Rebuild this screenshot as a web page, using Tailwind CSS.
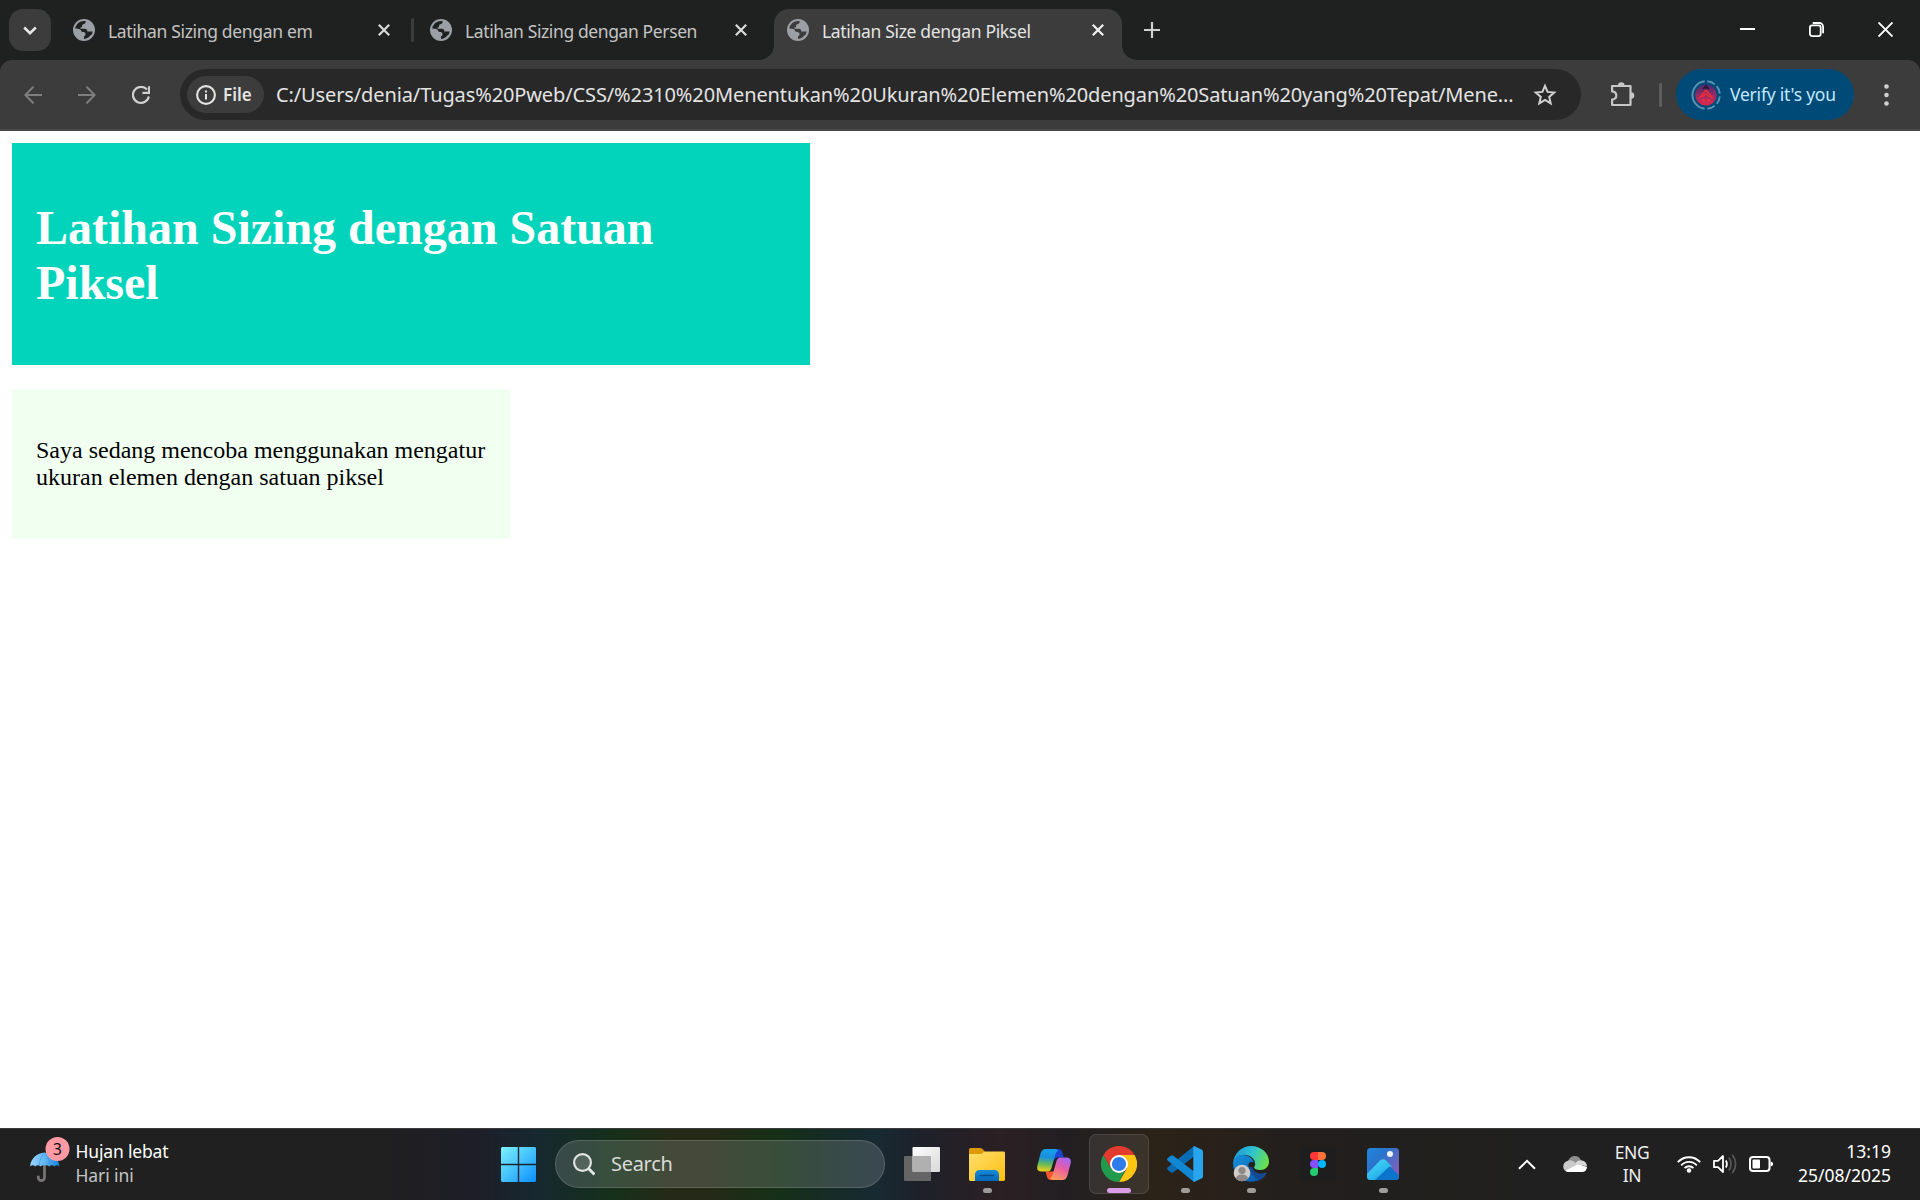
<!DOCTYPE html>
<html lang="id">
<head>
<meta charset="utf-8">
<title>Latihan Size dengan Piksel</title>
<script src="https://cdn.jsdelivr.net/npm/@tailwindcss/browser@4"></script>
</head>
<body class="flex h-[1200px] w-[1920px] flex-col overflow-hidden bg-white font-['Noto_Sans',sans-serif] whitespace-nowrap">

<svg class="hidden">
  <symbol id="globe" viewBox="0 0 22 22">
    <circle cx="11" cy="11" r="11" fill="#9aa0a6"/>
    <path fill="var(--hole)" d="M2.200 9.400C3.100 5.200 6.600 2.200 11 2.100h1.600c.1 1.700-.6 2.900-2.100 3.200-1.200.2-1.400.8-1.400 1.900 0 .8-.7 1.200-1.700 1.300v1.300h4.400c1.700 0 2.600 1 2.600 2.600v1.200h1.500c1.200 0 2 .5 2.500 1.600-1.600 2.700-4.300 4.500-7.400 4.700v-2.600c1.200-.2 1.500-.9 1.500-2.200 0-1.300-.6-1.900-1.900-2.100l-2-.3c-.6-2.300-2.400-3.400-6.400-3.300z"/>
    <path fill="var(--hole)" d="M14.400 12.400h5.300c-.3 1.400-.8 2.500-1.500 3.500l-3.800-1.600z"/>
  </symbol>
  <symbol id="close" viewBox="0 0 12 12"><path d="M.8.8l10.400 10.400M11.200.8L.8 11.200" fill="none" stroke="currentColor" stroke-width="2.200"/></symbol>
</svg>

<!-- Tab strip -->
<header class="flex h-[60px] shrink-0 bg-[#1f2120] text-[17.5px] tracking-[-0.33px]">
  <button class="mt-[9px] ml-[9px] grid size-[42px] place-items-center rounded-[14px] bg-[#3c3c3c]">
    <svg width="14" height="9" viewBox="0 0 14 9" fill="none" stroke="#e8e8e8" stroke-width="2.500"><path d="M1.200 1.500L7 7.200l5.800-5.700"/></svg>
  </button>
  <div class="mt-[9px] ml-[9px] flex w-[348px] items-start pt-[10px] pl-[13px] text-[#c3c3c3]">
    <svg class="size-[22px] [--hole:#1f2120]"><use href="#globe"/></svg>
    <span class="mt-px ml-[13px] w-[270px] leading-[22px]">Latihan Sizing dengan em</span>
    <svg class="mt-[5px] size-[12px] text-[#dadada]"><use href="#close"/></svg>
  </div>
  <div class="mt-[18px] ml-[3px] h-[24px] w-[3px] rounded-full bg-[#3c3c3c]"></div>
  <div class="mt-[9px] ml-[3px] flex w-[348px] items-start pt-[10px] pl-[13px] text-[#c3c3c3]">
    <svg class="size-[22px] [--hole:#1f2120]"><use href="#globe"/></svg>
    <span class="mt-px ml-[13px] w-[270px] leading-[22px] tracking-[-0.39px]">Latihan Sizing dengan Persen</span>
    <svg class="mt-[5px] size-[12px] text-[#dadada]"><use href="#close"/></svg>
  </div>
  <div class="relative mt-[9px] ml-[9px] flex w-[348px] items-start rounded-t-[15px] bg-[#3c3c3c] pt-[10px] pl-[13px] text-[#e3e3e3]">
    <svg class="absolute bottom-0 -left-[15px]" width="15" height="15"><path fill="#3c3c3c" d="M15 0v15H0A15 15 0 0 0 15 0z"/></svg>
    <svg class="absolute -right-[15px] bottom-0" width="15" height="15"><path fill="#3c3c3c" d="M0 0v15h15A15 15 0 0 1 0 0z"/></svg>
    <svg class="size-[22px] [--hole:#3c3c3c]"><use href="#globe"/></svg>
    <span class="mt-px ml-[13px] w-[270px] leading-[22px]">Latihan Size dengan Piksel</span>
    <svg class="mt-[5px] size-[12px] text-[#f1f1f1]"><use href="#close"/></svg>
  </div>
  <svg class="mt-[22px] ml-[22px]" width="16" height="16" viewBox="0 0 16 16" stroke="#d0d0d0" stroke-width="2.200"><path d="M8 0v16M0 8h16"/></svg>
  <div class="mr-[27px] ml-auto flex items-start pt-[22px]">
    <svg class="mr-[54px]" width="15" height="15" viewBox="0 0 15 15"><path fill="#fff" d="M0 6h15v2H0z"/></svg>
    <svg class="mr-[54px]" width="15" height="15" viewBox="0 0 15 15" fill="none" stroke="#fff" stroke-width="1.800"><rect x=".9" y="3.300" width="10.800" height="10.800" rx="2.300"/><path d="M3.700 1h6.600a3.800 3.800 0 0 1 3.800 3.800v6.500"/></svg>
    <svg width="15" height="15" viewBox="0 0 15 15" stroke="#fff" stroke-width="1.900"><path d="M.5.5l14 14M14.500.5l-14 14"/></svg>
  </div>
</header>

<!-- Toolbar -->
<div class="shrink-0 bg-[#1f2120]">
<nav class="flex h-[71px] items-center rounded-t-[12px] border-b-2 border-[#48484a] bg-[#3c3c3c]">
  <svg class="ml-[24px]" width="18" height="18" viewBox="0 0 18 18" fill="none" stroke="#7e7e7e" stroke-width="2"><path d="M18 9H1.500M9.500 .8L1.300 9l8.200 8.200"/></svg>
  <svg class="ml-[36px]" width="18" height="18" viewBox="0 0 18 18" fill="none" stroke="#7e7e7e" stroke-width="2"><path d="M0 9h16.500M8.500 .8L16.700 9l-8.200 8.200"/></svg>
  <svg class="ml-[36px]" width="18" height="18" viewBox="0 0 18 18"><path d="M16.800 10.500A8 8 0 1 1 15 3.600" fill="none" stroke="#d0d0d0" stroke-width="2.200"/><path d="M17.100.2v6.700h-6.700" fill="none" stroke="#d0d0d0" stroke-width="2.200"/></svg>
  <div class="ml-[30px] flex h-[51px] w-[1401px] items-center rounded-full bg-[#282828] pl-[7px] text-[#e3e3e3]">
    <div class="flex h-[37px] w-[77px] items-center rounded-full bg-[#3c3c3c] pl-[9px]">
      <svg width="20" height="20" viewBox="0 0 20 20"><circle cx="10" cy="10" r="8.900" fill="none" stroke="#e3e3e3" stroke-width="2.100"/><path fill="#e3e3e3" d="M9 9h2v5.500H9zM9 5.500h2v2H9z"/></svg>
      <span class="ml-[7px] text-[17px] font-semibold">File</span>
    </div>
    <span class="ml-[12px] w-[1257px] text-[20px] tracking-[-0.12px]">C:/Users/denia/Tugas%20Pweb/CSS/%2310%20Menentukan%20Ukuran%20Elemen%20dengan%20Satuan%20yang%20Tepat/Mene...</span>
    <svg width="24" height="23" viewBox="0 0 24 23"><path fill="none" stroke="#d0d0d0" stroke-width="2" d="M12 2.800l2.600 6.100 6.600.6-5 4.400 1.500 6.500L12 16.900l-5.700 3.500 1.500-6.500-5-4.400 6.600-.6z"/></svg>
  </div>
  <svg class="ml-[29px] -mt-[2px]" width="26" height="26" viewBox="0 0 26 26"><path fill="none" stroke="#c7c7c7" stroke-width="2.200" stroke-linejoin="round" d="M2.100 5h18.400v19H2.100v-5.400c5.600-.7 5.600-7.500 0-8.200z"/><path fill="#c7c7c7" d="M8 4.500a3.300 3.300 0 0 1 6.600 0zM21 11.200a3.300 3.300 0 0 1 0 6.600z"/></svg>
  <div class="ml-[23px] h-[24px] w-[3px] rounded-full bg-[#5e5e5e]"></div>
  <button class="ml-[14px] flex h-[51px] w-[178px] items-center rounded-full bg-[#004a77] pl-[15px] text-[17.5px] tracking-[-0.22px] text-[#c2e7ff]">
    <svg width="30" height="30" viewBox="0 0 30 30">
      <defs><linearGradient id="avatar" x2="0" y2="1"><stop stop-color="#4a2a70"/><stop offset=".55" stop-color="#a02a62"/><stop offset="1" stop-color="#e0284e"/></linearGradient></defs>
      <circle cx="15" cy="15" r="10.600" fill="url(#avatar)"/>
      <path d="M12 9l3-3 3 3M15 5.500v5" fill="none" stroke="#2c1636" stroke-width="1.600"/>
      <path d="M8.500 18l6.500-8 6.500 8M11.500 17l3.500-3.500 3.500 3.500" fill="none" stroke="#f23035" stroke-width="1.300"/>
      <path d="M11 20.500h3M16 20.500h3" stroke="#f23035" stroke-width="2"/>
      <path d="M13.700 28.800A13.900 13.900 0 0 1 13.700 1.200" fill="none" stroke="#5d93b4" stroke-width="1.900"/>
      <path d="M16.300 1.200A13.900 13.900 0 0 1 28.900 15a13.900 13.900 0 0 1-12.600 13.800" fill="none" stroke="#5d93b4" stroke-width="1.900" stroke-dasharray="8 2.900"/>
    </svg>
    <span class="ml-[9px]">Verify it's you</span>
  </button>
  <svg class="ml-[30px]" width="5" height="22" viewBox="0 0 5 22" fill="#d0d0d0"><circle cx="2.500" cy="2.500" r="2.300"/><circle cx="2.500" cy="11" r="2.300"/><circle cx="2.500" cy="19.500" r="2.300"/></svg>
</nav>
</div>

<!-- Page -->
<main class="flex-1 p-[12px] font-['Liberation_Serif',serif]">
  <section class="h-[222px] w-[798px] bg-[#01d4bb] px-[24px] pt-[57px]">
    <h1 class="text-[48px] leading-[55px] font-bold text-white">Latihan Sizing dengan Satuan<br>Piksel</h1>
  </section>
  <section class="mt-[24px] h-[150px] w-[498px] bg-[#f0fff0] px-[24px] pt-[48px]">
    <p class="text-[24px] leading-[27px] text-black">Saya sedang mencoba menggunakan mengatur<br>ukuran elemen dengan satuan piksel</p>
  </section>
</main>

<!-- Taskbar -->
<footer class="flex h-[72px] shrink-0 items-center border-t border-[#3c3c3c] bg-[linear-gradient(90deg,#202020_0,#202020_380px,#1e1e28_475px,#172830_535px,#152d20_590px,#17301a_615px,#242a17_670px,#242a17_710px,#163018_780px,#162c22_815px,#172a32_875px,#1f2029_925px,#2b2023_1000px,#221f22_1065px,#2b2318_1155px,#29211a_1215px,#221f1d_1290px,#21201d_1450px,#202020_1520px)] pb-px text-[17.5px] text-white">
  <div class="flex w-[501px] items-center pl-[30px]">
    <svg class="-mt-[9px]" width="40" height="46" viewBox="0 0 40 46">
      <defs><linearGradient id="umb"><stop stop-color="#9ad6ff"/><stop offset=".5" stop-color="#62b5f3"/><stop offset="1" stop-color="#1483e0"/></linearGradient></defs>
      <path d="M14.500 28v12.500a3.100 3.100 0 0 1-6.200 0v-1.700" fill="none" stroke="#7b7575" stroke-width="2.700"/>
      <path d="M0 29.500C1 21 7 16 14.500 15.500 22 16 28.500 21 29.500 29.500c-1.800-1.700-3.700-1.700-5.200 0-1.500-1.700-3.500-1.700-5 0-1.500-1.700-7-1.700-9 0-1.500-1.700-3.500-1.700-5 0-1.600-1.700-3.500-1.700-5.300 0z" fill="url(#umb)"/>
      <path d="M14.500 16c-4 4-5 8-5 13M14.500 16c4 4 5 8 5 13" fill="none" stroke="#3f97de" stroke-width=".7"/>
      <circle cx="27.500" cy="12" r="12" fill="#ff99a4"/>
      <text x="27.500" y="17.500" font-size="15.500" text-anchor="middle" fill="#111">3</text>
    </svg>
    <div class="ml-[5.500px] -mt-[2px] leading-[24px]"><div class="tracking-[-0.18px]">Hujan lebat</div><div class="text-[#c4c4c4] tracking-[-0.1px]">Hari ini</div></div>
  </div>
  <svg width="35" height="35" viewBox="0 0 35 35">
    <defs><linearGradient id="win" x2="1" y2="1"><stop stop-color="#7cf2ff"/><stop offset=".5" stop-color="#45c2fc"/><stop offset="1" stop-color="#0a8fff"/></linearGradient></defs>
    <path fill="url(#win)" d="M1 0h15.800v16.800H0V1zM18.200 0H34l1 1v15.800H18.200zM0 18.200h16.800V35H1l-1-1zM18.200 18.200H35V34l-1 1H18.200z"/>
  </svg>
  <div class="ml-[19px] flex h-[48px] w-[330px] items-center rounded-full border border-white/15 bg-white/15 pl-[17px]">
    <svg width="22" height="23" viewBox="0 0 22 23" fill="none" stroke="#e4e6e4"><circle cx="9.500" cy="9.500" r="8.400" fill="#ffffff22" stroke-width="2.100"/><path d="M15.500 15.500l6 6" stroke-width="3"/></svg>
    <span class="ml-[16px] text-[20px] tracking-[-0.3px] text-[#d8dbd6]">Search</span>
  </div>

  <div class="ml-[3px] grid h-full w-[66px] place-items-center pl-[2px]">
    <svg width="36" height="34" viewBox="0 0 36 34">
      <defs><linearGradient id="tv" x2="1" y2="1"><stop stop-color="#fff"/><stop offset="1" stop-color="#d8d8d8"/></linearGradient></defs>
      <rect y="9" width="27" height="25" rx="1" fill="#656565"/><rect x="8.500" width="27.500" height="25" rx="1" fill="url(#tv)"/><path fill="#aaa" fill-opacity=".9" d="M8.500 9H27v16H9.500l-1-1z"/>
    </svg>
  </div>
  <div class="relative grid h-full w-[66px] place-items-center">
    <svg width="36" height="33" viewBox="0 0 36 33">
      <defs><linearGradient id="fold" x2="1" y2="1"><stop stop-color="#ffdf70"/><stop offset="1" stop-color="#ffbe0e"/></linearGradient><linearGradient id="foldb" x2="0" y2="1"><stop stop-color="#138bd9"/><stop offset="1" stop-color="#0568b8"/></linearGradient></defs>
      <path d="M0 1.500Q0 0 1.500 0h9.500q1.500 0 2.500 1l2 2V8H0z" fill="#dd9a05"/><path d="M0 6h12.500l3-2.500H35l1 1V32l-1 1H1l-1-1z" fill="url(#fold)"/>
      <path d="M6 33v-6.500a4.500 4.500 0 0 1 4.500-4.500h15a4.500 4.500 0 0 1 4.500 4.500V33z" fill="url(#foldb)"/><path d="M11.500 27.500h13" stroke="#0a4a86" stroke-width="1.700" stroke-linecap="round"/>
    </svg>
    <i class="absolute bottom-[6px] h-[5px] w-[9px] rounded-full bg-[#9c9a9b]"></i>
  </div>
  <div class="grid h-full w-[66px] place-items-center pl-[2px]">
    <svg width="34" height="31" viewBox="0 0 34 31">
      <defs>
        <linearGradient id="cpa" x1=".4" x2=".3" y2="1"><stop stop-color="#15a0e8"/><stop offset=".35" stop-color="#1a8ee0"/><stop offset=".65" stop-color="#5fb960"/><stop offset="1" stop-color="#f5cf15"/></linearGradient>
        <linearGradient id="cpb" x1=".7" x2=".3" y2="1"><stop stop-color="#a866f5"/><stop offset=".45" stop-color="#e65da5"/><stop offset="1" stop-color="#ff9a58"/></linearGradient>
      </defs>
      <path fill="#1a45cf" d="M13 0h8.500q2.500 0 3.500 2.500l1.700 6H21q-3 0-4 3z"/>
      <path fill="#f4552f" d="M8.500 22.500h9L15 31h-1.500q-2.500 0-3.500-3z"/>
      <path fill="url(#cpa)" d="M8.500 0H18q2 0 3 2-1.500 0-2.500 3L14.500 19q-1 3.500-4 3.500H4.500Q-1 22.500.4 16.500L3.500 4.500Q5 0 8.500 0z"/>
      <path fill="url(#cpb)" d="M25.500 31H16q-2 0-3-2 1.500 0 2.500-3L19.500 12q1-3.500 4-3.500h6q5.500 0 4.100 6l-3.100 12Q29 31 25.500 31z"/>
    </svg>
  </div>
  <div class="grid h-full w-[66px] place-items-center">
    <div class="relative grid h-[60px] w-[60px] place-items-center rounded-[7px] border border-white/10 bg-white/8">
      <svg width="36" height="36" viewBox="0 0 36 36">
        <path fill="#e33b2e" d="M18 18L2.400 9A18 18 0 0 1 33.600 9z"/><path fill="#fdc412" d="M18 9h15.600A18 18 0 0 1 18 36l7.800-13.500z"/><path fill="#229a4b" d="M18 36A18 18 0 0 1 2.400 9l7.800 13.500L18 27l5.500-1.500z"/>
        <path fill="#e33b2e" d="M2.400 9h31.200L18 9l-7.800 13.500z"/><circle cx="18" cy="18" r="9" fill="#fff"/><circle cx="18" cy="18" r="7.100" fill="#2f7bea"/>
      </svg>
      <i class="absolute bottom-0 h-[5px] w-[24px] rounded-full bg-[#dc9de8]"></i>
    </div>
  </div>
  <div class="relative grid h-full w-[66px] place-items-center">
    <svg width="36" height="36" viewBox="0 0 36 36">
      <path fill="#0a6cb5" d="M27 0v10.500L6 26.500q-1.200.8-2.300-.2L.6 23.700q-1-1.100 0-2.300z"/>
      <path fill="#1287d3" d="M27 36V25.500L6 9.500q-1.200-.8-2.300.2L.6 12.300q-1 1.100 0 2.300z"/>
      <path fill="#27a5ee" d="M27 0l8 3.800q1 .6 1 1.700v25q0 1.100-1 1.700L27 36q-.7-.3-.7-1.500v-33Q26.300.3 27 0z"/>
    </svg>
    <i class="absolute bottom-[6px] h-[5px] w-[9px] rounded-full bg-[#a09d99]"></i>
  </div>
  <div class="relative grid h-full w-[66px] place-items-center">
    <svg width="36" height="36" viewBox="0 0 36 36">
      <defs>
        <linearGradient id="ea" x1="0" y1=".3" x2="1" y2=".6"><stop stop-color="#1f98dc"/><stop offset=".5" stop-color="#30c4cf"/><stop offset="1" stop-color="#6ee045"/></linearGradient>
        <linearGradient id="eb" x2=".6" y2="1"><stop stop-color="#1593dc"/><stop offset="1" stop-color="#0b62b5"/></linearGradient>
      </defs>
      <path fill="#124b93" d="M11 21c-1 7 5 15 13 14 4-1 8-4 9.500-7.500.4-1-.4-1.300-1.200-.9-5 2.300-11.300.4-13.300-5.600z"/>
      <path fill="url(#eb)" d="M0 17C1 10 7 8.500 11 9c6 .6 10 5 10 9-.2-3-5-3.500-5.500 1-.7 7 6 12 9.500 15.300C14 39 0 32 0 17z"/>
      <path fill="url(#ea)" d="M0 17C1 7 9 0 18 0c10 0 18 7 18 15.500 0 5.500-4 8.500-8.500 8.500-4 0-6.500-1.500-6.500-2.500 0-.7 1.200-1.500 1.200-3.700C22.200 13 17 8.800 11 8.800 5 8.800 1 12 0 17z"/>
      <circle cx="9" cy="27" r="8.300" fill="#cfccca"/><circle cx="9" cy="24.500" r="3.600" fill="#8d8987"/><path fill="#8d8987" d="M3 33q0-4.500 6-4.500t6 4.500q-6 4.500-12 0z"/>
    </svg>
    <i class="absolute bottom-[6px] h-[5px] w-[9px] rounded-full bg-[#a09d99]"></i>
  </div>
  <div class="grid h-full w-[66px] place-items-center pl-[2px]">
    <div class="grid size-[36px] place-items-center bg-[#1e1e1e]">
      <svg width="16" height="24" viewBox="0 0 16 24"><path fill="#ff3737" d="M8 0H4a4 4 0 0 0 0 8h4z"/><path fill="#ff7237" d="M8 0h4a4 4 0 0 1 0 8H8z"/><path fill="#874fff" d="M8 8H4a4 4 0 0 0 0 8h4z"/><circle cx="12" cy="12" r="4" fill="#00b6ff"/><path fill="#24cb71" d="M8 16H4a4 4 0 1 0 4 4z"/></svg>
    </div>
  </div>
  <div class="relative grid h-full w-[66px] place-items-center">
    <svg width="32" height="32" viewBox="0 0 32 32">
      <defs><linearGradient id="ph" x2="1" y2=".8"><stop stop-color="#1f86dc"/><stop offset=".4" stop-color="#2a74cc"/><stop offset="1" stop-color="#8b5cb8"/></linearGradient><linearGradient id="pm" x1=".2" x2="1" y2="1"><stop stop-color="#4ad9fb"/><stop offset="1" stop-color="#109be0"/></linearGradient><clipPath id="pc"><rect width="32" height="32" rx="3.500"/></clipPath></defs>
      <g clip-path="url(#pc)"><path fill="url(#ph)" d="M0 0h32v32H0z"/><path fill="#0c74ca" d="M8 32l10-11 4-3 10 9v5z"/><path fill="url(#pm)" d="M0 26l13-13.500q3-2.500 6 0l7 7q-2.500-2-5 .3L8 32H0z"/></g>
      <circle cx="23" cy="6" r="3" fill="#f0f5fb"/>
    </svg>
    <i class="absolute bottom-[6px] h-[5px] w-[9px] rounded-full bg-[#9f9e9d]"></i>
  </div>

  <div class="mr-[29px] ml-auto flex items-center">
    <svg width="18" height="11" viewBox="0 0 18 11" fill="none" stroke="#fff" stroke-width="2"><path d="M1 9.800l8-8 8 8"/></svg>
    <svg class="ml-[27px]" width="24" height="16" viewBox="0 0 24 16"><path fill="#8e8e8e" d="M5 5.500C7-1.500 16-1.500 18 4.500l-6 5z"/><path fill="#c9c9c9" d="M5.500 4.500C8 4 10 5 12 6.500l3 2L3 15.300C-1 13-1 6 5.500 4.500z"/><path fill="#d8d8d8" d="M12 7.500q3-4 7-3c3 .5 5 3 5 6z"/><path fill="#fff" d="M2.500 14.800L15 8l9 3q-.5 5-5 5H5q-1.500 0-2.500-1.200z"/></svg>
    <div class="ml-[26px] w-[38px] text-center leading-[23px] tracking-[-0.4px] text-[#eee]">ENG<br>IN</div>
    <svg class="ml-[26px]" width="24" height="18" viewBox="0 0 24 18" fill="none" stroke="#fff" stroke-width="1.900"><path d="M.8 7.200a15 15 0 0 1 22.400 0M4.200 10.300a10.500 10.500 0 0 1 15.600 0M7.600 13.200a6 6 0 0 1 8.800 0"/><circle cx="12" cy="15.500" r="2.200" fill="#fff" stroke="none"/></svg>
    <svg class="ml-[12px]" width="25" height="20" viewBox="0 0 25 20" fill="none" stroke="#fff" stroke-width="1.800"><path d="M1 6.800h4L10 2v16l-5-4.800H1z" stroke-linejoin="round"/><path d="M12.800 6.500q2.200 3.500 0 7"/><path d="M15.800 3.500q4.500 6.500 0 13M19.300 .8q6.500 9.200 0 18.400" stroke="#565656"/></svg>
    <svg class="ml-[11px]" width="25" height="16" viewBox="0 0 25 16"><rect x="1" y="1" width="19.500" height="14" rx="3" fill="none" stroke="#fff" stroke-width="2"/><rect x="3.500" y="3.500" width="7.500" height="9" rx="1" fill="#fff"/><path fill="#fff" d="M21.500 5.500q2.700.3 2.700 2.500t-2.700 2.500z"/></svg>
    <div class="-mt-[2px] ml-[22px] w-[95px] text-right leading-[24px]">13:19<br>25/08/2025</div>
  </div>
</footer>
</body>
</html>
